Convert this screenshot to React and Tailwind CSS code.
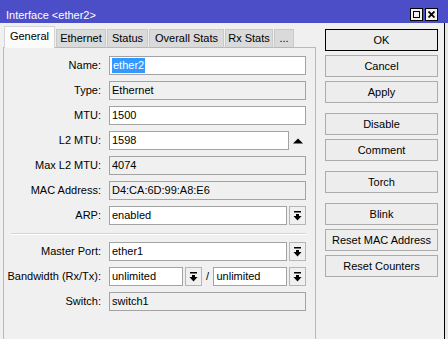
import React from "react";

const DropIcon = () => (
  <svg width="9" height="10" viewBox="0 0 9 10" className="block">
    <rect x="1" y="0" width="7" height="1.5" fill="#000" />
    <rect x="3" y="3" width="3" height="2" fill="#000" />
    <polygon points="0.5,5 8.5,5 4.5,9.5" fill="#000" />
  </svg>
);

const Field = ({ children, editable, className = "" }) => (
  <div
    className={`h-[19px] border border-[#a3a3a3] flex items-center pl-[2px] text-black whitespace-nowrap overflow-hidden ${
      editable ? "bg-white" : "bg-[#f0f0f0]"
    } ${className}`}
  >
    {children}
  </div>
);

const DropBtn = () => (
  <div className="h-[19px] w-[17px] border border-[#b5b5b5] bg-[#f0f0f0] flex items-center justify-center shrink-0">
    <DropIcon />
  </div>
);

const Row = ({ label, children }) => (
  <div className="flex items-center h-[19px]">
    <div className="w-[97px] text-right shrink-0">{label}</div>
    <div className="ml-[8px] flex items-center">{children}</div>
  </div>
);

const Btn = ({ children, primary, className = "" }) => (
  <div
    className={`h-[22px] flex items-center justify-center border bg-[#ededed] text-black ${
      primary ? "border-black" : "border-[#acacac]"
    } ${className}`}
  >
    {children}
  </div>
);

// widths measured off the reference
const tabs = [
  { name: "Ethernet", w: "w-[50px]" },
  { name: "Status", w: "w-[41px]" },
  { name: "Overall Stats", w: "w-[75px]" },
  { name: "Rx Stats", w: "w-[48px]" },
  { name: "...", w: "w-[20px]" },
];

const App = () => {
  return (
    <div
      className="w-[448px] h-[339px] bg-[#f0f0f0] overflow-hidden flex flex-col text-[11px] leading-[13px] text-black"
      style={{ fontFamily: '"Liberation Sans", Arial, sans-serif' }}
    >
      {/* title bar */}
      <div className="h-[23px] shrink-0 bg-[#4c4ec8] flex items-start justify-between pl-[6px] pr-[10px]">
        <div className="text-white pt-[9px]">Interface &lt;ether2&gt;</div>
        <div className="flex gap-[2px] pt-[8px]">
          <div className="w-[13px] h-[13px] bg-[#f0f0f0] border border-black flex items-center justify-center">
            <div className="w-[7px] h-[7px] border border-black" />
          </div>
          <div className="w-[13px] h-[13px] bg-[#f0f0f0] border border-black flex items-center justify-center">
            <svg width="7" height="7" viewBox="0 0 7 7">
              <path d="M0.5 0.5 L6.5 6.5 M6.5 0.5 L0.5 6.5" stroke="#000" strokeWidth="1.8" />
            </svg>
          </div>
        </div>
      </div>

      <div className="flex flex-1">
        {/* left: tabs + panel */}
        <div className="ml-[3px] w-[313px] pt-[3px] flex flex-col">
          <div className="h-[22px] flex items-end pl-[1px] gap-[1px] relative z-10">
            <div className="h-[22px] w-[51px] bg-[#fbfbfb] border border-b-0 border-[#d4d4d4] flex items-center justify-center pb-[2px]">
              General
            </div>
            {tabs.map((t) => (
              <div
                key={t.name}
                className={`h-[19px] ${t.w} whitespace-nowrap bg-[#dadada] border border-[#c9c9c9] border-b-[#b8b8b8] flex items-center justify-center`}
              >
                {t.name}
              </div>
            ))}
          </div>
          <div className="-mt-[1px] flex-1 border border-b-0 border-[#b9b9b9] pt-[8px] flex flex-col gap-[6px]">
            <Row label="Name:">
              <Field editable className="w-[197px] pl-[1px]">
                <span className="bg-[#3399ff] text-white h-[15px] flex items-center px-[1px]">ether2</span>
              </Field>
            </Row>
            <Row label="Type:">
              <Field className="w-[197px]">Ethernet</Field>
            </Row>
            <Row label="MTU:">
              <Field editable className="w-[197px]">1500</Field>
            </Row>
            <Row label="L2 MTU:">
              <Field editable className="w-[180px]">1598</Field>
              <svg width="10" height="6" viewBox="0 0 10 6" className="ml-[4px]">
                <polygon points="0,5.5 10,5.5 5,0.5" fill="#000" />
              </svg>
            </Row>
            <Row label="Max L2 MTU:">
              <Field className="w-[197px]">4074</Field>
            </Row>
            <Row label="MAC Address:">
              <Field className="w-[197px]">D4:CA:6D:99:A8:E6</Field>
            </Row>
            <Row label="ARP:">
              <div className="w-[197px] flex gap-[2px]">
                <Field editable className="flex-1">enabled</Field>
                <DropBtn />
              </div>
            </Row>
            <div className="ml-[7px] w-[295px] mt-[2px] mb-[1px] h-[2px] border-t border-[#d6d6d6] border-b border-b-white" />
            <Row label="Master Port:">
              <div className="w-[197px] flex gap-[2px]">
                <Field editable className="flex-1">ether1</Field>
                <DropBtn />
              </div>
            </Row>
            <Row label="Bandwidth (Rx/Tx):">
              <div className="w-[197px] flex items-center">
                <Field editable className="w-[74px]">unlimited</Field>
                <div className="ml-[2px]"><DropBtn /></div>
                <div className="w-[12px] text-center">/</div>
                <Field editable className="w-[74px]">unlimited</Field>
                <div className="ml-[2px]"><DropBtn /></div>
              </div>
            </Row>
            <Row label="Switch:">
              <Field className="w-[197px]">switch1</Field>
            </Row>
          </div>
        </div>

        {/* right: buttons */}
        <div className="ml-[9px] w-[113px] pt-[6px] flex flex-col gap-[4px]">
          <Btn primary>OK</Btn>
          <Btn>Cancel</Btn>
          <Btn>Apply</Btn>
          <Btn className="mt-[6px]">Disable</Btn>
          <Btn>Comment</Btn>
          <Btn className="mt-[6px]">Torch</Btn>
          <Btn className="mt-[6px]">Blink</Btn>
          <Btn>Reset MAC Address</Btn>
          <Btn>Reset Counters</Btn>
        </div>

        <div className="ml-auto w-[4px] border-l border-black bg-[#e8e8e8]" />
      </div>
    </div>
  );
};

export default App;
